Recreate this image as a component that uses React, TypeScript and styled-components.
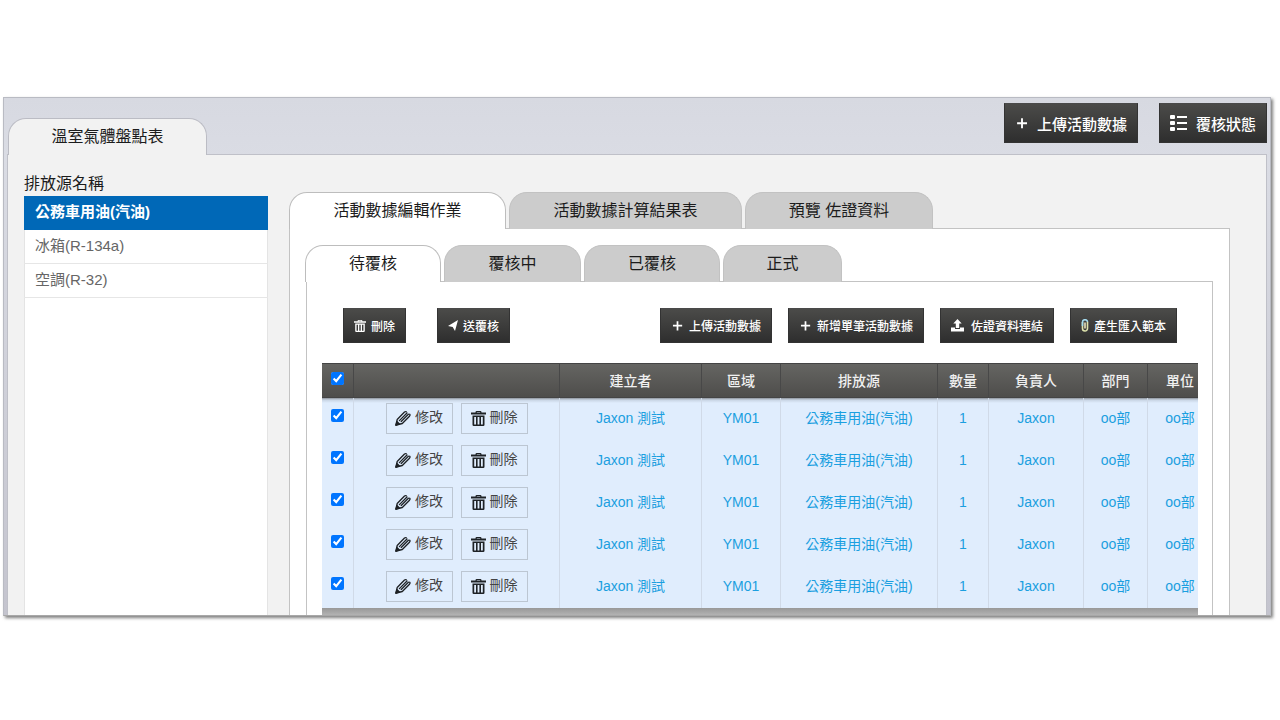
import React, { useState } from "react";
import styled, { createGlobalStyle } from "styled-components";

const GlobalStyle = createGlobalStyle`
  * { box-sizing: border-box; }
  body {
    margin: 0;
    background: #fff;
    color: #1c1c1c;
    font-family: "Liberation Sans", "Noto Sans CJK TC", sans-serif;
    font-size: 16px;
    line-height: 24px;
  }
  button { font-family: inherit; cursor: pointer; }
`;

const Page = styled.div`
  padding: 97px 9px 64px 3px;
`;

const Window = styled.div`
  display: flex;
  flex-direction: column;
  border: 1px solid #b9bbc3;
  border-bottom-color: #a8a8a8;
  background: linear-gradient(#d7d9e1, #dadce4 12%, #c4c4ce);
  box-shadow: 2px 2px 3px rgba(0, 0, 0, 0.5);
`;

const TopBar = styled.header`
  display: flex;
  justify-content: space-between;
  align-items: flex-end;
  height: 56px;
  padding-left: 4px;
`;

const PageTab = styled.h1`
  margin: 0 0 -1px;
  width: 199px;
  height: 37px;
  z-index: 1;
  border: 1px solid #bbbcc4;
  border-bottom: 0;
  border-radius: 18px 18px 0 0;
  background: #f2f2f2;
  font-size: 16px;
  font-weight: 400;
  line-height: 36px;
  text-align: center;
`;

const TopActions = styled.div`
  display: flex;
  align-self: flex-start;
  gap: 21px;
  padding: 5px 3px 0 0;
`;

const DarkButton = styled.button<{ $large?: boolean }>`
  display: flex;
  align-items: center;
  height: ${(p) => (p.$large ? 40 : 35)}px;
  padding: 0 10px;
  gap: ${(p) => (p.$large ? 8 : 5)}px;
  border: 1px solid #333;
  border-top-color: #4a4a4a;
  background: linear-gradient(#4b4b49, #2e2e2e);
  color: #fff;
  font-size: ${(p) => (p.$large ? 15 : 12)}px;
  font-weight: 500;
  white-space: nowrap;
`;

const Body = styled.div`
  display: flex;
  margin: 0 3px;
  padding: 17px 36px 0 16px;
  border: 1px solid #bfc0c8;
  border-bottom: 0;
  background: #f2f2f2;
`;

const Sidebar = styled.nav`
  flex: none;
  width: 244px;
  display: flex;
  flex-direction: column;
`;

const SidebarTitle = styled.h2`
  margin: 0;
  font-size: 16px;
  font-weight: 400;
  line-height: 24px;
`;

const SourceList = styled.ul`
  flex: 1;
  margin: 0;
  padding: 0;
  list-style: none;
  border: 1px solid #e4e4e4;
  border-width: 0 1px;
  background: #fff;
`;

const SourceLink = styled.a<{ $active?: boolean }>`
  display: block;
  height: 34px;
  margin: 0 -1px;
  padding-left: 11px;
  border-bottom: 1px solid ${(p) => (p.$active ? "#0068b7" : "#e6e6e6")};
  background: ${(p) => (p.$active ? "#0068b7" : "transparent")};
  color: ${(p) => (p.$active ? "#fff" : "#666")};
  font-size: 15px;
  font-weight: ${(p) => (p.$active ? 700 : 400)};
  line-height: 32px;
  text-decoration: none;
`;

const Main = styled.main`
  flex: 1;
  min-width: 0;
  padding: 20px 0 0 21px;
`;

const Tabs = styled.div`
  display: flex;
  gap: 3px;
  margin-bottom: -1px;
`;

const Tab = styled.button<{ $active?: boolean; $width: number }>`
  position: relative;
  width: ${(p) => p.$width}px;
  height: 37px;
  padding: 0 0 4px;
  border: 1px solid ${(p) => (p.$active ? "#bdbdbd" : "#c2c2c2")};
  border-bottom: 0;
  border-radius: 18px 18px 0 0;
  background: ${(p) => (p.$active ? "#fff" : "#ccc")};
  color: #1c1c1c;
  font-size: 16px;
`;

const Panel = styled.section`
  border: 1px solid #c3c3c3;
  border-bottom: 0;
  background: #fff;
`;

const OuterPanel = styled(Panel)`
  padding: 16px 16px 0 15px;
`;

const InnerPanel = styled(Panel)`
  margin-left: 1px;
  padding: 26px 14px 0 15px;
`;

const Toolbar = styled.div`
  display: flex;
  justify-content: space-between;
  padding: 0 21px 20px;
`;

const ButtonGroup = styled.div<{ $gap: number }>`
  display: flex;
  gap: ${(p) => p.$gap}px;
`;

const TableArea = styled.div`
  overflow: hidden;
  padding-bottom: 7px;
  background: linear-gradient(to top, #b2b2b2, #959595 8px);
`;

const Table = styled.table`
  table-layout: fixed;
  width: 100%;
  border-collapse: separate;
  border-spacing: 0;
  font-size: 14px;
`;

const Th = styled.th<{ $width?: number }>`
  width: ${(p) => (p.$width ? `${p.$width}px` : "auto")};
  height: 35px;
  padding: 1px 0 0;
  border-right: 1px solid #484848;
  border-top: 1px solid #444;
  border-bottom: 1px solid #444;
  background: linear-gradient(#656562, #4e4d4b);
  color: #f0f0f0;
  font-weight: 500;
  white-space: nowrap;
  &:last-child { border-right: 0; }
`;

const Td = styled.td`
  height: 42px;
  padding: 0 0 2px;
  border-right: 1px solid #d0dae8;
  color: #1b9fe0;
  text-align: center;
  white-space: nowrap;
  &:last-child { border-right: 0; }
`;

const Row = styled.tr`
  background: #e0edfd;
  &:first-child td { background: linear-gradient(#8e939b, #c9d5e4 2px, #e0edfd 5px); }
`;

const UnitTh = styled(Th)`
  padding-left: 14px;
`;

const UnitTd = styled(Td)`
  padding-left: 14px;
`;

const Check = styled.input`
  display: block;
  width: 13px;
  height: 13px;
  margin: 0 auto 5px;
  accent-color: #0075ff;
`;

const RowActions = styled.div`
  display: flex;
  justify-content: center;
  gap: 8px;
`;

const RowButton = styled.button`
  display: flex;
  align-items: center;
  justify-content: center;
  gap: 4px;
  width: 67px;
  height: 31px;
  padding: 0;
  border: 1px solid #bcc6d2;
  background: transparent;
  color: #444;
  font-size: 14px;
  svg { color: #1e2226; }
  span { padding-bottom: 4px; }
`;

const TrashIcon = ({ size }: { size: number }) => (
  <svg width={size} height={size} viewBox="0 0 15 15" fill="currentColor" aria-hidden="true">
    <path d="M4.500 1.200Q4.500 0 5.700 0h3.600q1.200 0 1.200 1.200V1.500H15v2H0v-2h4.500zM5.800 1.500h3.400V1H5.800z" fillRule="evenodd" />
    <path d="M1.500 4.500h12v9.300q0 1.200-1.200 1.200H2.700q-1.200 0-1.200-1.200zM3.200 6v7.500H5V6zM6.600 6v7.500h1.800V6zM10 6v7.500h1.800V6z" fillRule="evenodd" />
  </svg>
);

const PencilIcon = () => (
  <svg width="16" height="16" viewBox="0 0 16 16" fill="none" stroke="currentColor" strokeWidth="1.300" strokeLinejoin="round" strokeLinecap="round" aria-hidden="true">
    <path d="M1 15 2.200 9.500 9.500 2Q10.500 1.200 11.300 1.800" />
    <path d="M1 15l6.300-1.500L14.500 6.200Q15.400 5 14.700 4.300" />
    <path d="M4.400 10.600 12 3M6.200 11.500 13.400 4.300" />
    <path d="M1 15l.9-3.600 2.700 2.700z" fill="currentColor" />
  </svg>
);

const PlusIcon = ({ size }: { size: number }) => (
  <svg width={size} height={size} viewBox="0 0 12 12" stroke="currentColor" strokeWidth="1.600" aria-hidden="true">
    <path d="M6 2v8.500M1.800 6.200h8.500" />
  </svg>
);

const ListIcon = () => (
  <svg width="18" height="16" viewBox="0 0 18 16" fill="currentColor" aria-hidden="true">
    <rect x="0" y="0" width="5" height="4" rx="1" />
    <rect x="0" y="6" width="5" height="4" rx="1" />
    <rect x="0" y="12" width="5" height="4" rx="1" />
    <path d="M7 1h10v2H7zM7 7h10v2H7zM7 13h10v2H7z" />
  </svg>
);

const SendIcon = () => (
  <svg width="10" height="11" viewBox="0 0 10 11" fill="currentColor" aria-hidden="true">
    <path d="M10 0 7 11 4.700 7 0 6z" />
  </svg>
);

const UploadIcon = () => (
  <svg width="15" height="13" viewBox="0 0 15 13" fill="currentColor" aria-hidden="true">
    <path d="M6.500 0 10.700 4.500H8.200V9H4.800V4.500H2.300z" />
    <path d="M0 8.500h4v1.500h5V8.500h4V12.500H0z" />
  </svg>
);

const ClipIcon = () => (
  <svg width="8" height="13" viewBox="0 0 8 13" fill="none" aria-hidden="true">
    <path d="M1.500 3v6.500a2.500 2.500 0 0 0 5 0V3" stroke="#dfe4ad" strokeWidth="1.600" />
    <path d="M1.500 7V3a2.500 2.300 0 0 1 5 0" stroke="#a5dcef" strokeWidth="1.600" />
    <path d="M4 3.500v6" stroke="#f4edc4" strokeWidth="1.500" />
  </svg>
);

const sources = ["公務車用油(汽油)", "冰箱(R-134a)", "空調(R-32)"];
const columns: { label: string; width?: number }[] = [
  { label: "", width: 206 },
  { label: "建立者", width: 142 },
  { label: "區域", width: 79 },
  { label: "排放源" },
  { label: "數量", width: 51 },
  { label: "負責人", width: 95 },
  { label: "部門", width: 64 },
];
const record = ["Jaxon 測試", "YM01", "公務車用油(汽油)", "1", "Jaxon", "oo部"];

export default function App() {
  const [checked, setChecked] = useState([true, true, true, true, true]);
  const all = checked.every(Boolean);
  const toggleAll = () => setChecked(checked.map(() => !all));
  const toggle = (row: number) => setChecked(checked.map((v, i) => (i === row ? !v : v)));

  return (
    <>
      <GlobalStyle />
      <Page>
        <Window>
          <TopBar>
            <PageTab>溫室氣體盤點表</PageTab>
            <TopActions>
              <DarkButton $large><PlusIcon size={14} />上傳活動數據</DarkButton>
              <DarkButton $large><ListIcon />覆核狀態</DarkButton>
            </TopActions>
          </TopBar>
          <Body>
            <Sidebar>
              <SidebarTitle>排放源名稱</SidebarTitle>
              <SourceList>
                {sources.map((s, i) => (
                  <li key={s}><SourceLink href="#" $active={i === 0}>{s}</SourceLink></li>
                ))}
              </SourceList>
            </Sidebar>
            <Main>
              <Tabs>
                <Tab $active $width={217}>活動數據編輯作業</Tab>
                <Tab $width={233}>活動數據計算結果表</Tab>
                <Tab $width={188}>預覽 佐證資料</Tab>
              </Tabs>
              <OuterPanel>
                <Tabs>
                  <Tab $active $width={136}>待覆核</Tab>
                  <Tab $width={137}>覆核中</Tab>
                  <Tab $width={136}>已覆核</Tab>
                  <Tab $width={119}>正式</Tab>
                </Tabs>
                <InnerPanel>
                  <Toolbar>
                    <ButtonGroup $gap={31}>
                      <DarkButton><TrashIcon size={12} />刪除</DarkButton>
                      <DarkButton><SendIcon />送覆核</DarkButton>
                    </ButtonGroup>
                    <ButtonGroup $gap={16}>
                      <DarkButton><PlusIcon size={13} />上傳活動數據</DarkButton>
                      <DarkButton><PlusIcon size={13} />新增單筆活動數據</DarkButton>
                      <DarkButton><UploadIcon />佐證資料連結</DarkButton>
                      <DarkButton><ClipIcon />產生匯入範本</DarkButton>
                    </ButtonGroup>
                  </Toolbar>
                  <TableArea>
                    <Table>
                      <thead>
                        <tr>
                          <Th $width={32}>
                            <Check type="checkbox" aria-label="全選" checked={all} onChange={toggleAll} />
                          </Th>
                          {columns.map((c, i) => <Th key={i} $width={c.width}>{c.label}</Th>)}
                          <UnitTh $width={50}>單位</UnitTh>
                        </tr>
                      </thead>
                      <tbody>
                        {checked.map((on, i) => (
                          <Row key={i}>
                            <Td>
                              <Check type="checkbox" aria-label={`選取第 ${i + 1} 筆`} checked={on} onChange={() => toggle(i)} />
                            </Td>
                            <Td>
                              <RowActions>
                                <RowButton><PencilIcon /><span>修改</span></RowButton>
                                <RowButton><TrashIcon size={15} /><span>刪除</span></RowButton>
                              </RowActions>
                            </Td>
                            {record.map((v) => <Td key={v}>{v}</Td>)}
                            <UnitTd>oo部</UnitTd>
                          </Row>
                        ))}
                      </tbody>
                    </Table>
                  </TableArea>
                </InnerPanel>
              </OuterPanel>
            </Main>
          </Body>
        </Window>
      </Page>
    </>
  );
}
